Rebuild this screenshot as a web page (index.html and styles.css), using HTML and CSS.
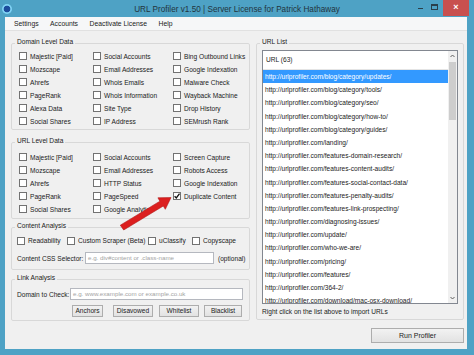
FILE: index.html
```html
<!DOCTYPE html>
<html>
<head>
<meta charset="utf-8">
<link rel="stylesheet" href="styles.css">
</head>
<body>
<div class="window">
  <div class="titlebar">
    <span class="app-icon"></span>
    <span class="title">URL Profiler v1.50 | Server License for Patrick Hathaway</span>
    <div class="controls">
      <span class="min"></span>
      <span class="max"></span>
      <span class="close">×</span>
    </div>
  </div>
  <div class="client">
    <div class="menubar">
      <span>Settings</span><span>Accounts</span><span>Deactivate License</span><span>Help</span>
    </div>
    <div class="main">
      <div class="left">
        <fieldset class="group g-domain">
          <legend>Domain Level Data</legend>
          <div class="checks">
            <label class="chk"><span class="cb"></span>Majestic [Paid]</label>
            <label class="chk"><span class="cb"></span>Social Accounts</label>
            <label class="chk"><span class="cb"></span>Bing Outbound Links</label>
            <label class="chk"><span class="cb"></span>Mozscape</label>
            <label class="chk"><span class="cb"></span>Email Addresses</label>
            <label class="chk"><span class="cb"></span>Google Indexation</label>
            <label class="chk"><span class="cb"></span>Ahrefs</label>
            <label class="chk"><span class="cb"></span>Whois Emails</label>
            <label class="chk"><span class="cb"></span>Malware Check</label>
            <label class="chk"><span class="cb"></span>PageRank</label>
            <label class="chk"><span class="cb"></span>Whois Information</label>
            <label class="chk"><span class="cb"></span>Wayback Machine</label>
            <label class="chk"><span class="cb"></span>Alexa Data</label>
            <label class="chk"><span class="cb"></span>Site Type</label>
            <label class="chk"><span class="cb"></span>Drop History</label>
            <label class="chk"><span class="cb"></span>Social Shares</label>
            <label class="chk"><span class="cb"></span>IP Address</label>
            <label class="chk"><span class="cb"></span>SEMrush Rank</label>
          </div>
        </fieldset>
        <fieldset class="group g-url">
          <legend>URL Level Data</legend>
          <div class="checks">
            <label class="chk"><span class="cb"></span>Majestic [Paid]</label>
            <label class="chk"><span class="cb"></span>Social Accounts</label>
            <label class="chk"><span class="cb"></span>Screen Capture</label>
            <label class="chk"><span class="cb"></span>Mozscape</label>
            <label class="chk"><span class="cb"></span>Email Addresses</label>
            <label class="chk"><span class="cb"></span>Robots Access</label>
            <label class="chk"><span class="cb"></span>Ahrefs</label>
            <label class="chk"><span class="cb"></span>HTTP Status</label>
            <label class="chk"><span class="cb"></span>Google Indexation</label>
            <label class="chk"><span class="cb"></span>PageRank</label>
            <label class="chk"><span class="cb"></span>PageSpeed</label>
            <label class="chk"><span class="cb checked"><svg viewBox="0 0 8 8" width="8" height="8"><path d="M1.6 4.2 L3.3 5.9 L6.5 1.6" fill="none" stroke="#111" stroke-width="1.3"/></svg></span>Duplicate Content</label>
            <label class="chk"><span class="cb"></span>Social Shares</label>
            <label class="chk"><span class="cb"></span>Google Analytics</label>
          </div>
        </fieldset>
        <fieldset class="group g-content">
          <legend>Content Analysis</legend>
          <div class="checks-row">
            <label class="chk"><span class="cb"></span>Readability</label>
            <label class="chk"><span class="cb"></span>Custom Scraper (Beta)</label>
            <label class="chk"><span class="cb"></span>uClassify</label>
            <label class="chk"><span class="cb"></span>Copyscape</label>
          </div>
          <div class="field-row css-row">
            <span class="field-label">Content CSS Selector:</span>
            <span class="textbox css-box">e.g. div#content or .class-name</span>
            <span class="hint">(optional)</span>
          </div>
        </fieldset>
        <fieldset class="group g-link">
          <legend>Link Analysis</legend>
          <div class="field-row link-row">
            <span class="field-label">Domain to Check:</span>
            <span class="textbox link-box">e.g. www.example.com or example.co.uk</span>
          </div>
          <div class="btn-row">
            <button class="btn b-anchors">Anchors</button>
            <button class="btn b-disavowed">Disavowed</button>
            <button class="btn b-white">Whitelist</button>
            <button class="btn b-black">Blacklist</button>
          </div>
        </fieldset>
      </div>
      <div class="right">
        <fieldset class="group g-list">
          <legend>URL List</legend>
          <div class="listbox">
            <div class="list-body">
              <div class="list-head">URL (63)</div>
              <div class="row sel">http://urlprofiler.com/blog/category/updates/</div>
              <div class="row">http://urlprofiler.com/blog/category/tools/</div>
              <div class="row">http://urlprofiler.com/blog/category/seo/</div>
              <div class="row">http://urlprofiler.com/blog/category/how-to/</div>
              <div class="row">http://urlprofiler.com/blog/category/guides/</div>
              <div class="row">http://urlprofiler.com/landing/</div>
              <div class="row">http://urlprofiler.com/features-domain-research/</div>
              <div class="row">http://urlprofiler.com/features-content-audits/</div>
              <div class="row">http://urlprofiler.com/features-social-contact-data/</div>
              <div class="row">http://urlprofiler.com/features-penalty-audits/</div>
              <div class="row">http://urlprofiler.com/features-link-prospecting/</div>
              <div class="row">http://urlprofiler.com/diagnosing-issues/</div>
              <div class="row">http://urlprofiler.com/update/</div>
              <div class="row">http://urlprofiler.com/who-we-are/</div>
              <div class="row">http://urlprofiler.com/pricing/</div>
              <div class="row">http://urlprofiler.com/features/</div>
              <div class="row">http://urlprofiler.com/364-2/</div>
              <div class="row">http://urlprofiler.com/download/mac-osx-download/</div>
            </div>
            <div class="scrollbar">
              <svg class="sb-arrow" viewBox="0 0 9 10" width="9" height="10"><path d="M2.5 6 L4.5 4 L6.5 6" fill="none" stroke="#606060" stroke-width="1"/></svg>
              <div class="sb-track"><div class="sb-thumb"></div></div>
              <svg class="sb-arrow" viewBox="0 0 9 10" width="9" height="10"><path d="M2.5 4 L4.5 6 L6.5 4" fill="none" stroke="#606060" stroke-width="1"/></svg>
            </div>
          </div>
          <div class="list-note">Right click on the list above to import URLs</div>
        </fieldset>
        <button class="btn run">Run Profiler</button>
      </div>
    </div>
  </div>
  <svg class="arrow" viewBox="0 0 70 45" width="70" height="45">
    <polygon points="10.3,35.2 49.9,11.2 47.9,7.8 61,7.6 55.3,19.3 53.3,16.0 13.7,40.0" fill="#dc1f1f" stroke="#b01515" stroke-width="0.6" stroke-linejoin="round"/>
  </svg>
</div>
</body>
</html>
```

FILE: styles.css
```css
* { box-sizing: border-box; }
html, body { margin: 0; padding: 0; }
body {
  width: 474px;
  height: 355px;
  overflow: hidden;
  background: #4ea2c5;
  font-family: "Liberation Sans", Arial, sans-serif;
  font-size: 6.6px;
  color: #1b1b1b;
}
.window {
  position: relative;
  width: 474px;
  height: 355px;
  background: #4ea2c5;
  display: flex;
  flex-direction: column;
}
.titlebar {
  height: 17px;
  flex: none;
  display: grid;
  grid-template-columns: 1fr auto 1fr;
  align-items: start;
}
.app-icon {
  width: 10px;
  height: 10px;
  margin: 4px 0 0 2px;
  border-radius: 50%;
  background: radial-gradient(circle at 50% 50%, #1c4d9c 0 42%, #7fd2f4 52% 72%, #2d78bb 82% 100%);
}
.title {
  font-size: 8.2px;
  line-height: 17px;
  padding-top: 1px;
  color: #22343d;
  white-space: nowrap;
}
.controls {
  justify-self: end;
  display: flex;
  align-items: flex-start;
  margin-right: 5px;
}
.min {
  width: 5px;
  height: 1px;
  background: #2a3f4a;
  margin: 8px 8px 0 0;
}
.max {
  width: 7px;
  height: 6px;
  border: 1px solid #2a3f4a;
  border-top-width: 2px;
  margin: 4px 5px 0 0;
}
.close {
  width: 26px;
  height: 16px;
  background: #c8504f;
  color: #fff;
  font-size: 9px;
  font-weight: bold;
  line-height: 15px;
  text-align: center;
}
.client {
  flex: 1;
  margin: 0 7px 6px 5px;
  background: #f0f0f0;
  display: flex;
  flex-direction: column;
}
.menubar {
  height: 14px;
  flex: none;
  display: flex;
  align-items: center;
  gap: 11.5px;
  padding-left: 9px;
  background: #f6f7f8;
  border-bottom: 1px solid #e1e1e1;
  font-size: 6.8px;
}
.main {
  display: grid;
  grid-template-columns: 239px 208px;
  column-gap: 6px;
  padding: 5.5px 0 0 6px;
  align-items: start;
}
.left, .right {
  display: flex;
  flex-direction: column;
}
.group {
  margin: 0;
  padding: 0;
  min-width: 0;
  border: 1px solid #d8d8d8;
  border-radius: 2px;
}
.group legend {
  margin-left: 3px;
  padding: 0 2px 3px;
  line-height: 10px;
}
.checks {
  display: grid;
  grid-template-columns: 74px 80px 1fr;
  grid-auto-rows: 13px;
  padding-left: 7px;
}
.chk {
  display: flex;
  align-items: center;
  gap: 3px;
  white-space: nowrap;
}
.cb {
  flex: none;
  width: 8px;
  height: 8px;
  background: #fff;
  border: 1px solid #727272;
  position: relative;
}
.cb svg {
  position: absolute;
  left: -1px;
  top: -1px;
}
.g-domain .checks { padding-bottom: 1.5px; }
.g-url { margin-top: 5.5px; }
.g-url .checks { padding-top: 2px; padding-bottom: 2.5px; }
.g-content { margin-top: 2px; }
.checks-row {
  display: grid;
  grid-template-columns: 50px 81px 44px 1fr;
  height: 13px;
  padding-left: 5px;
}
.field-row {
  display: flex;
  align-items: center;
  padding-left: 5px;
  white-space: nowrap;
}
.css-row { margin-top: 5px; padding-bottom: 5px; }
.css-row .field-label { width: 68px; }
.textbox {
  height: 12px;
  line-height: 10px;
  background: #fff;
  border: 1px solid #b5b8bf;
  color: #a3a3a3;
  padding-left: 2px;
  font-size: 6.2px;
  overflow: hidden;
}
.css-box { width: 129px; }
.hint { margin-left: 4px; }
.g-link { margin-top: 3px; }
.link-row { margin-top: 2px; }
.link-row .field-label { width: 53px; }
.link-box { width: 173px; }
.btn-row {
  display: flex;
  margin: 5px 0 0 60px;
  padding-bottom: 3px;
}
.btn {
  font-family: inherit;
  font-size: 6.6px;
  color: #1b1b1b;
  height: 12px;
  padding: 0;
  line-height: 10px;
  border: 1px solid #adadad;
  background: linear-gradient(#f2f2f2, #e2e2e2);
}
.b-anchors { width: 31px; }
.b-disavowed { width: 40px; margin-left: 10px; }
.b-white { width: 40px; margin-left: 6px; }
.b-black { width: 38px; margin-left: 5px; }
.listbox {
  display: flex;
  height: 254px;
  margin: 0.5px 5px 0 5px;
  border: 1px solid #828790;
  background: #fff;
}
.list-body {
  flex: 1;
  min-width: 0;
  overflow: hidden;
}
.list-head {
  height: 19px;
  line-height: 18px;
  padding-left: 3px;
  border-bottom: 1px solid #e4e4e4;
}
.row {
  height: 13.2px;
  line-height: 13.2px;
  padding-left: 2px;
  white-space: nowrap;
}
.row.sel {
  background: #3399ff;
  color: #fff;
}
.scrollbar {
  flex: none;
  width: 9px;
  display: flex;
  flex-direction: column;
  background: #f0f0f0;
}
.sb-arrow { flex: none; display: block; }
.sb-track { flex: 1; padding: 1px 1px 0; }
.sb-thumb {
  height: 58px;
  background: #cdcdcd;
}
.list-note {
  margin: 3px 0 0 5px;
  line-height: 10px;
  padding-bottom: 2px;
}
.run {
  align-self: flex-end;
  width: 93px;
  height: 15px;
  margin-top: 8px;
  font-size: 7px;
}
.arrow {
  position: absolute;
  left: 110px;
  top: 190px;
}
```
